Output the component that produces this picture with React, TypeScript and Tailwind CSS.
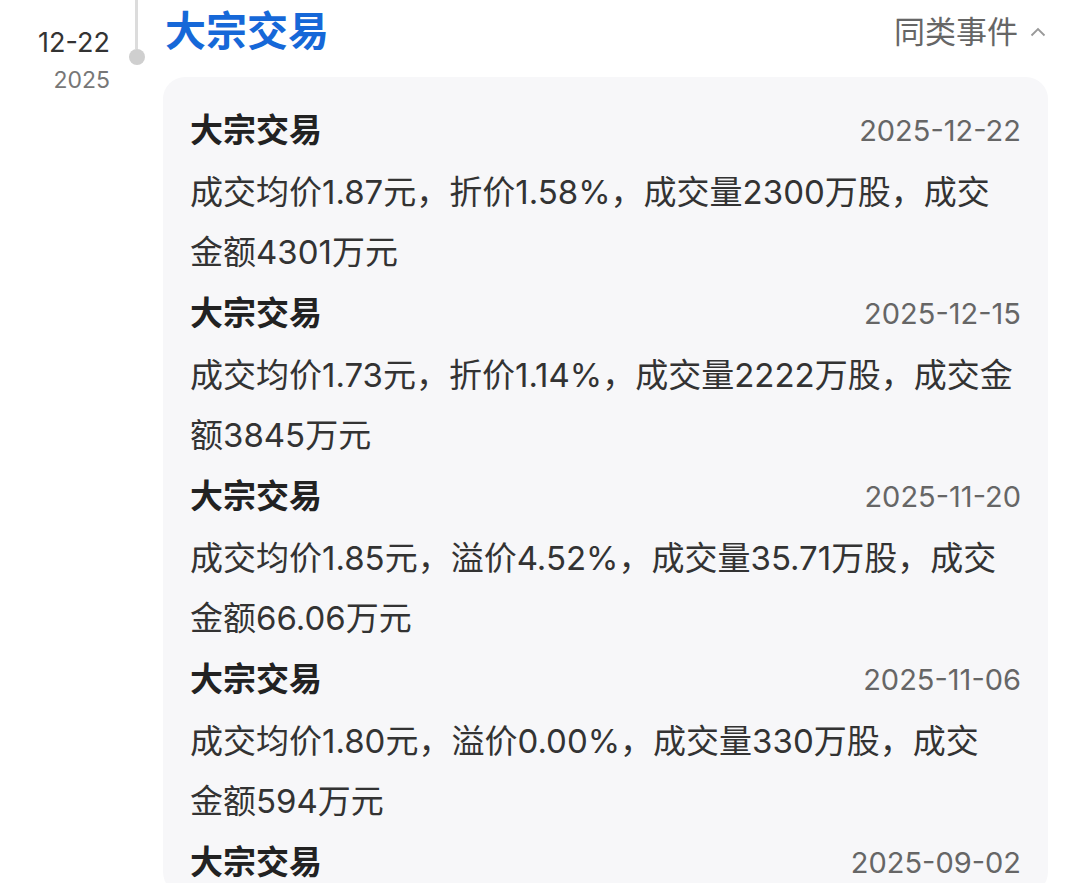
import React from "react";

type Deal = { date: string; lines: string[] };

const deals: Deal[] = [
  { date: "2025-12-22", lines: ["成交均价1.87元，折价1.58%，成交量2300万股，成交", "金额4301万元"] },
  { date: "2025-12-15", lines: ["成交均价1.73元，折价1.14%，成交量2222万股，成交金", "额3845万元"] },
  { date: "2025-11-20", lines: ["成交均价1.85元，溢价4.52%，成交量35.71万股，成交", "金额66.06万元"] },
  { date: "2025-11-06", lines: ["成交均价1.80元，溢价0.00%，成交量330万股，成交", "金额594万元"] },
  { date: "2025-09-02", lines: [] },
];

const font = { fontFamily: '"Inter", "Noto Sans CJK SC", sans-serif' };

export default function App() {
  return (
    <div style={font} className="flex h-[883px] w-[1080px] overflow-hidden bg-white">
      {/* date column */}
      <div className="flex w-[110px] shrink-0 flex-col items-end pt-[25px]">
        <div className="text-[27px] leading-[36px] text-[#333]">12-22</div>
        <div className="mt-[4px] text-[23px] leading-[30px] text-[#777]">2025</div>
      </div>

      {/* timeline */}
      <div className="flex w-[53px] shrink-0 flex-col items-center">
        <div className="h-[49px] w-[3px] bg-[#dcdcdc]" />
        <div className="h-4 w-4 rounded-full bg-[#cfcfcf]" />
      </div>

      {/* content */}
      <div className="flex w-[885px] shrink-0 flex-col">
        <div className="flex h-[64px] shrink-0 items-center justify-between pl-[2px]">
          <span className="text-[41px] font-semibold text-[#1668d8]">大宗交易</span>
          <span className="flex items-center gap-[12px] pr-[2px] text-[31px] text-[#666]">
            同类事件
            <svg width="16" height="10" viewBox="0 0 16 10" fill="none">
              <polyline points="1.5,8.5 8,2 14.5,8.5" stroke="#999" strokeWidth="1.8" />
            </svg>
          </span>
        </div>

        <div className="mt-[13px] flex-1 rounded-[22px] bg-[#f7f7f9] px-[27px] pt-[22px]">
          {deals.map((d, i) => (
            <div key={i}>
              <div className="flex h-[63px] items-center justify-between">
                <span className="text-[33px] font-bold text-[#222]">大宗交易</span>
                <span className="text-[29px] text-[#666]">{d.date}</span>
              </div>
              {d.lines.map((l, j) => (
                <div key={j} className="whitespace-nowrap text-[33px] leading-[60px] text-[#333]">
                  {l}
                </div>
              ))}
            </div>
          ))}
        </div>
      </div>
    </div>
  );
}
